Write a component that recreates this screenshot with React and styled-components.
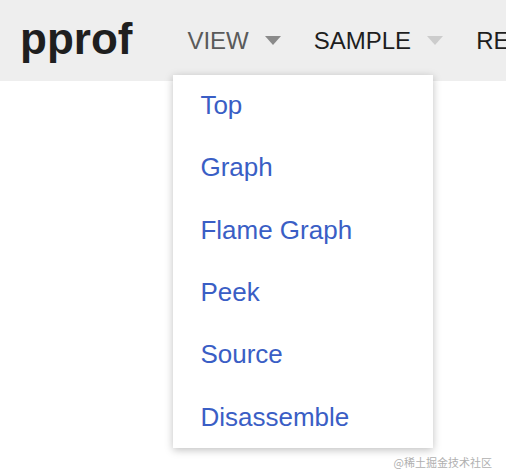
import React from "react";
import styled, { createGlobalStyle } from "styled-components";

const GlobalStyle = createGlobalStyle`
    html, body {
        margin: 0;
        padding: 0;
        background: #ffffff;
        font-family: "Liberation Sans", Arial, sans-serif;
    }
`;

const viewItems = ["Top", "Graph", "Flame Graph", "Peek", "Source", "Disassemble"];

const App = () => {
    return (
        <Page>
            <GlobalStyle />
            <Header>
                <Logo>pprof</Logo>
                <Menu>
                    <MenuItem>
                        <MenuTitle active>VIEW</MenuTitle>
                        <Caret active />
                        <Dropdown>
                            {viewItems.map((item) => (
                                <DropItem key={item}>{item}</DropItem>
                            ))}
                        </Dropdown>
                    </MenuItem>
                    <MenuItem>
                        <MenuTitle>SAMPLE</MenuTitle>
                        <Caret />
                    </MenuItem>
                    <MenuItem>
                        <MenuTitle>REFINE</MenuTitle>
                        <Caret />
                    </MenuItem>
                </Menu>
            </Header>
            <Watermark>@稀土掘金技术社区</Watermark>
        </Page>
    );
};

const Page = styled.div`
    position: relative;
    width: 506px;
    height: 476px;
    overflow: hidden;
    background: #ffffff;
`;

const Header = styled.div`
    display: flex;
    align-items: center;
    height: 81px;
    padding-left: 20px;
    background: #eeeeee;
    white-space: nowrap;
`;

const Logo = styled.div`
    font-size: 44px;
    font-weight: bold;
    color: #1f1f1f;
    margin-right: 55px;
    margin-top: -4px;
`;

const Menu = styled.div`
    display: flex;
    align-items: center;
    gap: 33px;
`;

const MenuItem = styled.div`
    position: relative;
    display: flex;
    align-items: center;
    gap: 16px;
`;

const MenuTitle = styled.span`
    font-size: 24px;
    color: ${(p) => (p.active ? "#5a5a5a" : "#1e1e1e")};
`;

const Caret = styled.span`
    width: 0;
    height: 0;
    border-left: 8.5px solid transparent;
    border-right: 8.5px solid transparent;
    border-top: 9px solid ${(p) => (p.active ? "#8a8a8a" : "#cccccc")};
`;

const Dropdown = styled.div`
    position: absolute;
    top: 48px;
    left: -14px;
    width: 260px;
    background: #ffffff;
    box-shadow: 0 2px 8px rgba(0, 0, 0, 0.25);
    z-index: 2;
`;

const DropItem = styled.div`
    height: 62.3px;
    display: flex;
    align-items: center;
    padding-left: 27px;
    font-size: 26px;
    color: #3a5ec5;
    cursor: pointer;
`;

const Watermark = styled.div`
    position: absolute;
    right: 14px;
    bottom: 6px;
    font-family: "Noto Sans CJK SC", sans-serif;
    font-size: 11px;
    color: #b0b0b0;
`;

export default App;
